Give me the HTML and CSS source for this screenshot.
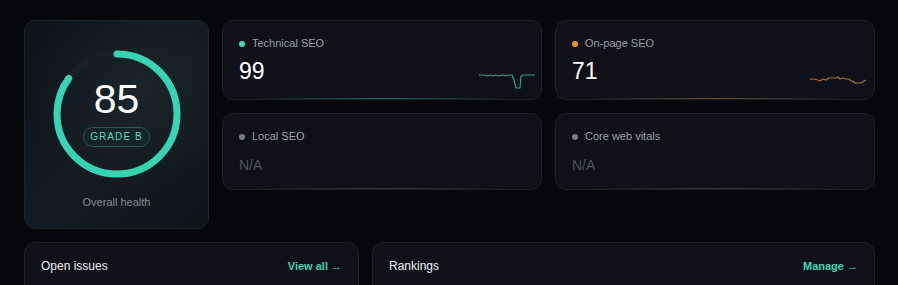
FILE: index.html
```html
<!DOCTYPE html>
<html lang="en">
<head>
  <meta charset="UTF-8">
  <meta name="viewport" content="width=device-width, initial-scale=1.0">
  <title>SEO Overview</title>
  <link rel="stylesheet" href="styles.css">
</head>
<body>
  <section class="top">
    <div class="health-card">
      <div class="ring">
        <svg width="128" height="128" viewBox="0 0 128 128">
          <circle class="ring-track" cx="64" cy="64" r="60"></circle>
          <circle class="ring-value" cx="64" cy="64" r="60" stroke-dasharray="320.4 377" transform="rotate(-90 64 64)"></circle>
        </svg>
        <div class="ring-text">
          <div class="score">85</div>
          <div class="grade">GRADE B</div>
        </div>
      </div>
      <p class="health-label">Overall health</p>
    </div>

    <div class="metrics">
      <div class="metric teal">
        <div class="metric-label"><span class="dot"></span>Technical SEO</div>
        <div class="metric-value">99</div>
        <svg class="spark" width="56" height="20" viewBox="0 0 56 20">
          <polyline points="0,4 5,4 8,5 11,4 14,5 17,4 20,5 24,4 27,5 30,4 33,4 35,9 37,17 41,17 42,5 44,4 48,4 51,4 56,4"></polyline>
        </svg>
      </div>
      <div class="metric orange">
        <div class="metric-label"><span class="dot"></span>On-page SEO</div>
        <div class="metric-value">71</div>
        <svg class="spark" width="56" height="12" viewBox="0 0 56 12">
          <polyline points="0,4 4,4 8,5 10,6 13,4 16,5 19,3 23,3 26,3 28,2 30,4 33,3 36,4 39,4 41,6 43,6 45,8 48,8 51,8 54,6 56,5"></polyline>
        </svg>
      </div>
      <div class="metric gray">
        <div class="metric-label"><span class="dot"></span>Local SEO</div>
        <div class="metric-value na">N/A</div>
      </div>
      <div class="metric gray">
        <div class="metric-label"><span class="dot"></span>Core web vitals</div>
        <div class="metric-value na">N/A</div>
      </div>
    </div>
  </section>

  <section class="bottom">
    <div class="panel">
      <div class="panel-head">
        <h3>Open issues</h3>
        <a href="#" class="panel-link">View all &rarr;</a>
      </div>
    </div>
    <div class="panel">
      <div class="panel-head">
        <h3>Rankings</h3>
        <a href="#" class="panel-link">Manage &rarr;</a>
      </div>
    </div>
  </section>
</body>
</html>
```

FILE: styles.css
```css
body, html {
  margin: 0;
  padding: 0;
  background-color: #07080b;
  font-family: "Liberation Sans", Arial, sans-serif;
  color: #e8eaee;
}

body {
  padding: 20px 23px 0 24px;
  height: 285px;
  box-sizing: border-box;
  overflow: hidden;
}

.top {
  display: flex;
  gap: 13px;
  align-items: flex-start;
}

.health-card {
  width: 185px;
  height: 209px;
  box-sizing: border-box;
  border: 1px solid #1d2128;
  border-radius: 11px;
  background:
    radial-gradient(circle at 60% 30%, rgba(40, 70, 75, 0.25), transparent 60%),
    linear-gradient(135deg, #0e1219 0%, #141b22 55%, #0f1419 100%);
  display: flex;
  flex-direction: column;
  align-items: center;
  padding-top: 29px;
}

.ring {
  position: relative;
  width: 128px;
  height: 128px;
}

.ring svg {
  display: block;
}

.ring-track {
  fill: none;
  stroke: #1a1e26;
  stroke-width: 7;
}

.ring-value {
  fill: none;
  stroke: #37d4b4;
  stroke-width: 7;
  stroke-linecap: round;
}

.ring-text {
  position: absolute;
  inset: 0;
  display: flex;
  flex-direction: column;
  align-items: center;
  justify-content: center;
}

.score {
  font-size: 41px;
  line-height: 42px;
  color: #ffffff;
  margin-top: -4px;
}

.grade {
  margin-top: 7px;
  width: 67px;
  height: 20px;
  box-sizing: border-box;
  border: 1px solid #245a52;
  border-radius: 10px;
  background-color: rgba(20, 45, 45, 0.35);
  color: #5ed8bd;
  font-size: 10px;
  letter-spacing: 1.1px;
  display: flex;
  align-items: center;
  justify-content: center;
}

.health-label {
  margin: 18px 0 0;
  font-size: 11px;
  color: #878c97;
}

.metrics {
  flex: 1;
  display: grid;
  grid-template-columns: 1fr 1fr;
  grid-template-rows: 80px 77px;
  gap: 13px;
}

.metric {
  position: relative;
  border: 1px solid #1d2029;
  border-radius: 11px;
  background-color: #0f1018;
  padding: 16px 16px 0 16px;
  overflow: hidden;
}

.metric::after {
  content: "";
  position: absolute;
  left: 10%;
  right: 10%;
  bottom: 0;
  height: 1px;
}

.metric.teal::after {
  background: linear-gradient(90deg, transparent, rgba(55, 212, 180, 0.45), transparent);
}

.metric.orange::after {
  background: linear-gradient(90deg, transparent, rgba(230, 150, 80, 0.45), transparent);
}

.metric.gray::after {
  background: linear-gradient(90deg, transparent, rgba(140, 145, 160, 0.3), transparent);
}

.metric-label {
  display: flex;
  align-items: center;
  font-size: 11px;
  line-height: 13px;
  color: #9a9ea9;
}

.dot {
  width: 6px;
  height: 6px;
  border-radius: 50%;
  margin-right: 7px;
  background-color: #767b86;
}

.teal .dot {
  background-color: #3fdcb8;
}

.orange .dot {
  background-color: #f0913a;
}

.gray .metric-label {
  color: #9da1ab;
}

.metric-value {
  margin-top: 8px;
  font-size: 23px;
  line-height: 26px;
  color: #ffffff;
}

.metric-value.na {
  margin-top: 9px;
  font-size: 14px;
  color: #4f5461;
}

.spark {
  position: absolute;
  right: 6px;
}

.teal .spark {
  top: 50px;
}

.orange .spark {
  top: 54px;
  right: 8px;
}

.spark polyline {
  fill: none;
  stroke-width: 1.2;
  stroke-linejoin: round;
}

.teal .spark polyline {
  stroke: #2f9e8a;
}

.orange .spark polyline {
  stroke: #a8703c;
}

.bottom {
  margin-top: 13px;
  display: grid;
  grid-template-columns: 335px 1fr;
  gap: 13px;
}

.panel {
  border: 1px solid #1d2029;
  border-radius: 11px;
  background-color: #0f1018;
  height: 60px;
}

.panel-head {
  display: flex;
  justify-content: space-between;
  align-items: center;
  padding: 16px 16px 0 16px;
}

.panel-head h3 {
  margin: 0;
  font-size: 12px;
  font-weight: normal;
  color: #eceef2;
}

.panel-link {
  font-size: 11px;
  font-weight: bold;
  color: #3fd6b4;
  text-decoration: none;
}
```
